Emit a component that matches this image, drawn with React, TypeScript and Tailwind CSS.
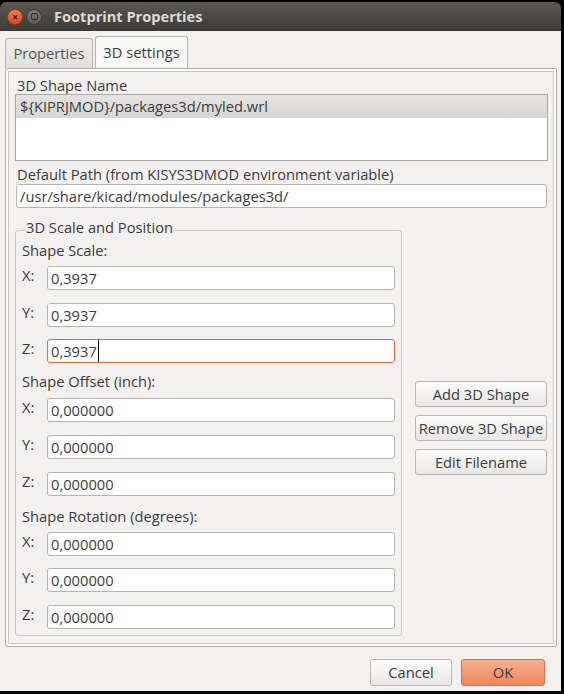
import React from 'react';

const font = { fontFamily: '"Open Sans", "DejaVu Sans", sans-serif' };

// Single text field row: "X:" label + entry
const AxisRow: React.FC<{ axis: string; value: string; focused?: boolean; className?: string }> = ({
  axis,
  value,
  focused,
  className = '',
}) => (
  <div className={`flex items-start ${className}`}>
    <span className="w-[25px] pt-[1px] leading-[17px]">{axis}:</span>
    <div
      className={`flex h-[24px] w-[348px] items-center rounded-[3px] border bg-white pl-[3px] ${
        focused ? 'border-[#e0683c]' : 'border-[#b6b4b0]'
      }`}
    >
      <span className={focused ? 'border-r border-black pr-[1px]' : ''}>{value}</span>
    </div>
  </div>
);

const GtkButton: React.FC<{ label: string; className?: string; primary?: boolean }> = ({
  label,
  className = '',
  primary,
}) => (
  <button
    className={`flex items-center justify-center rounded-[3px] border ${
      primary
        ? 'border-[#d2714e] bg-gradient-to-b from-[#f8ae90] to-[#ee875d]'
        : 'border-[#b9b7b3] bg-gradient-to-b from-[#fbfbfa] to-[#e8e7e5]'
    } ${className}`}
  >
    {label}
  </button>
);

const App: React.FC = () => {
  return (
    <div className="h-[694px] w-[564px] bg-black pt-[2px] text-[14.7px] text-[#3c3c3c]" style={font}>
      <div className="flex h-[689px] w-[561px] flex-col overflow-hidden rounded-t-[6px]">
        {/* Title bar */}
        <div className="flex h-[29px] shrink-0 items-center bg-gradient-to-b from-[#5c5851] to-[#3c3b37]">
          <div className="ml-[7px] flex h-[16px] w-[16px] items-center justify-center rounded-full border border-[#9a3a17] bg-gradient-to-b from-[#f27c54] to-[#d7481c]">
            <span className="text-[10px] leading-none font-bold text-[#3a1406]">×</span>
          </div>
          <div className="ml-[3px] flex h-[16px] w-[16px] items-center justify-center rounded-full border border-[#3a3935] bg-gradient-to-b from-[#7c7a74] to-[#5e5c57]">
            <span className="h-[7px] w-[7px] rounded-[2px] border border-[#2e2d2a]" />
          </div>
          <span className="ml-[12px] text-[14.6px] font-bold text-[#dfdbd2]">Footprint Properties</span>
        </div>

        {/* Dialog body */}
        <div className="flex flex-1 flex-col bg-[#f2f1f0] px-[5px] pt-[5px]">
          {/* Tabs */}
          <div className="flex h-[32px] items-end">
            <div className="flex h-[30px] w-[88px] items-center justify-center rounded-t-[3px] border border-b-0 border-[#b6b4b0] bg-gradient-to-b from-[#eeedeb] to-[#e0dfdc] text-[#555]">
              Properties
            </div>
            <div className="ml-[2px] flex h-[32px] w-[93px] items-center justify-center rounded-t-[3px] border border-b-0 border-[#b6b4b0] bg-[#f7f7f6]">
              3D settings
            </div>
          </div>

          {/* Notebook page */}
          <div className="h-[579px] w-[552px] rounded-[2px] border border-[#b0aeaa] bg-[#fbfbfa] p-[2px]">
            <div className="flex h-full flex-col border border-[#c8c6c2] bg-[#f2f1f0] px-[6px] pt-[5px]">
              <span className="pl-[2px] leading-[17px]">3D Shape Name</span>
              <div className="h-[67px] w-[533px] border border-[#aaa8a4] bg-white">
                <div className="flex h-[23px] items-center bg-gradient-to-b from-[#e4e3e1] to-[#d8d7d5] pl-[4px]">
                  {'${KIPRJMOD}/packages3d/myled.wrl'}
                </div>
              </div>

              <span className="mt-[5px] pl-[2px] leading-[17px]">Default Path (from KISYS3DMOD environment variable)</span>
              <div className="ml-[1px] mt-[1px] flex h-[24px] w-[531px] items-center rounded-[3px] border border-[#b6b4b0] bg-white pl-[3px]">
                /usr/share/kicad/modules/packages3d/
              </div>

              <div className="mt-[14px] flex items-start">
                {/* Group box */}
                <fieldset className="h-[414px] w-[387px] rounded-[3px] border border-[#c8c6c2] px-[6px]">
                  <legend className="relative -top-[3px] ml-[3px] px-[1px] leading-[17px]">3D Scale and Position</legend>

                  <div className="mt-[3px] leading-[17px]">Shape Scale:</div>
                  <AxisRow axis="X" value="0,3937" className="mt-[7px]" />
                  <AxisRow axis="Y" value="0,3937" className="mt-[13px]" />
                  <AxisRow axis="Z" value="0,3937" focused className="mt-[12px]" />

                  <div className="mt-[10px] leading-[17px]">Shape Offset (inch):</div>
                  <AxisRow axis="X" value="0,000000" className="mt-[8px]" />
                  <AxisRow axis="Y" value="0,000000" className="mt-[13px]" />
                  <AxisRow axis="Z" value="0,000000" className="mt-[13px]" />

                  <div className="mt-[12px] leading-[17px]">Shape Rotation (degrees):</div>
                  <AxisRow axis="X" value="0,000000" className="mt-[7px]" />
                  <AxisRow axis="Y" value="0,000000" className="mt-[12px]" />
                  <AxisRow axis="Z" value="0,000000" className="mt-[13px]" />
                </fieldset>

                {/* Side buttons */}
                <div className="ml-[13px] mt-[159px] flex flex-col gap-[8px]">
                  <GtkButton label="Add 3D Shape" className="h-[26px] w-[132px]" />
                  <GtkButton label="Remove 3D Shape" className="h-[26px] w-[132px]" />
                  <GtkButton label="Edit Filename" className="h-[26px] w-[132px]" />
                </div>
              </div>
            </div>
          </div>

          {/* Dialog buttons */}
          <div className="mt-[12px] flex justify-end gap-[9px] pr-[11px]">
            <GtkButton label="Cancel" className="h-[27px] w-[82px]" />
            <GtkButton label="OK" primary className="h-[27px] w-[84px]" />
          </div>
        </div>
      </div>
    </div>
  );
};

export default App;
